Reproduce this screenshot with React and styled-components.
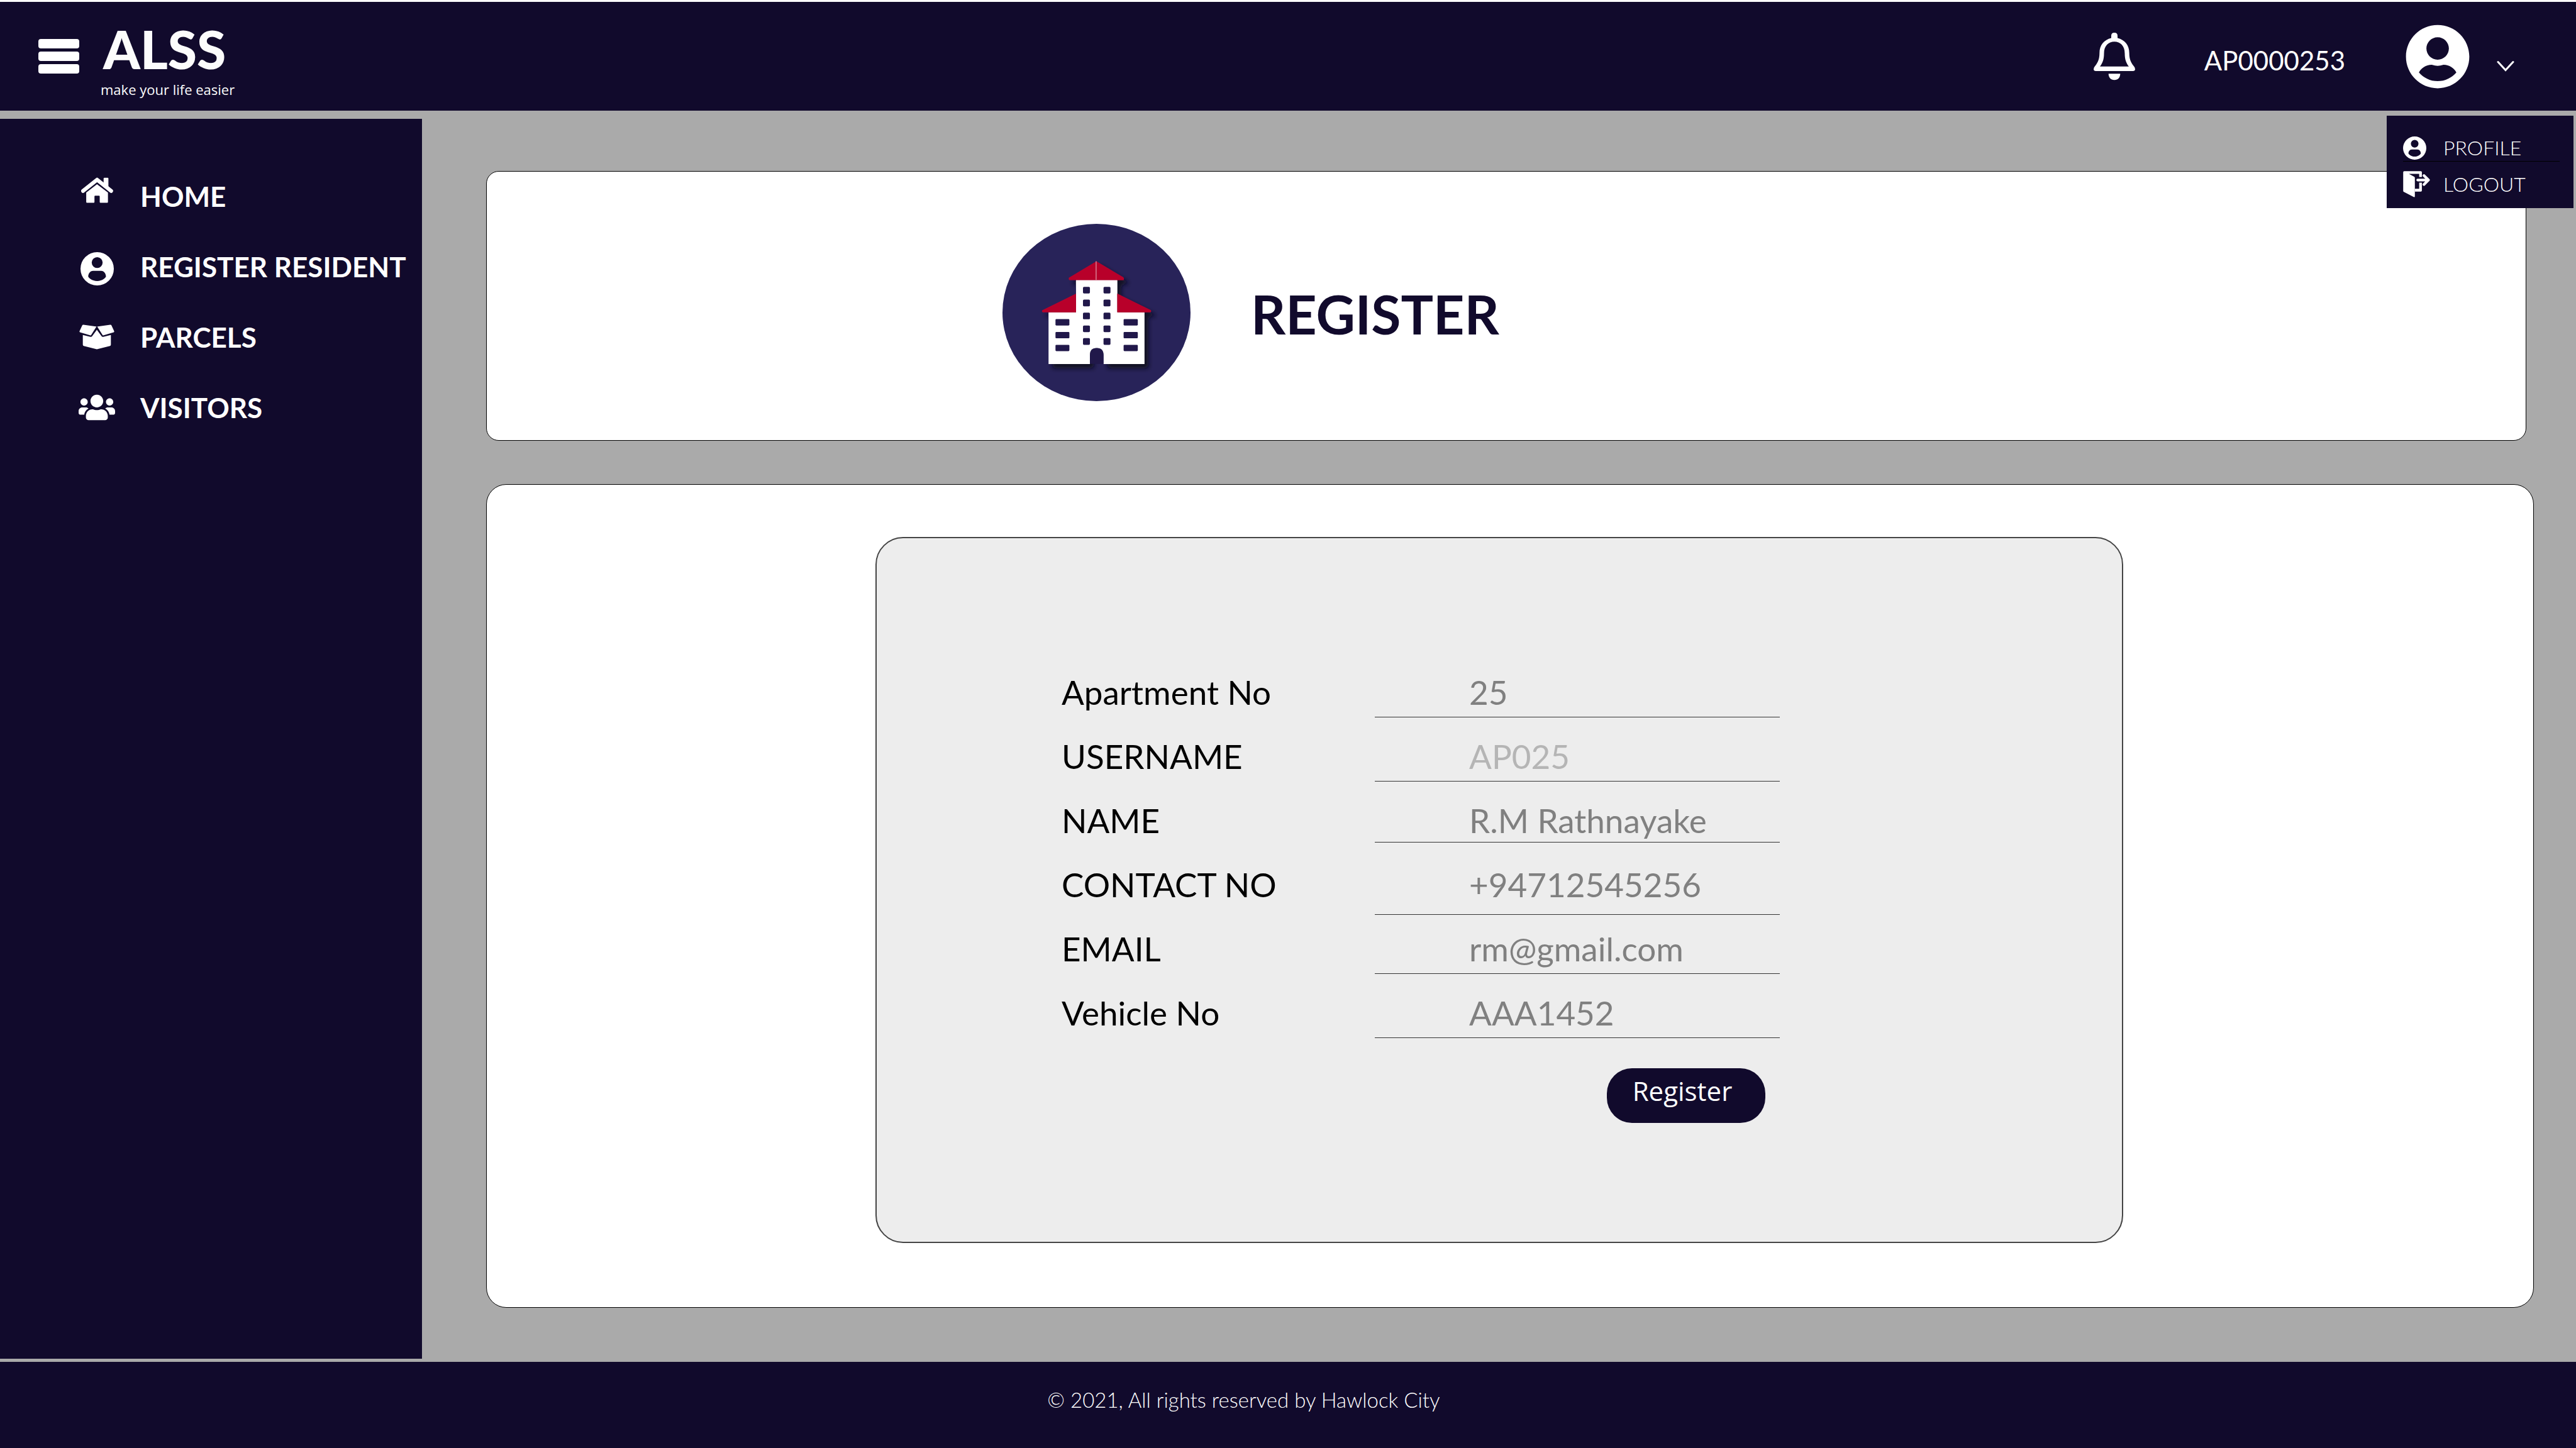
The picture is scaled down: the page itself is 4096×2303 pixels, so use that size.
import React from "react";
import styled, { createGlobalStyle, css } from "styled-components";
import { FaUserCircle, FaUsers } from "react-icons/fa";

const navy = "#110a2c";
const grey = "#aaaaaa";

const GlobalStyle = createGlobalStyle`
  *, *::before, *::after { box-sizing: border-box; }
  body {
    margin: 0;
    background: ${grey};
    font-family: Lato, "Open Sans", sans-serif;
  }
`;

const Page = styled.div`
  display: flex;
  flex-direction: column;
  min-height: 100vh;
  border-top: 3px solid #fff;
  background: ${grey};
`;

const Header = styled.header`
  position: relative;
  display: flex;
  align-items: center;
  justify-content: space-between;
  height: 173px;
  padding: 0 98px 0 61px;
  background: ${navy};
  color: #fff;
`;

const Group = styled.div`
  display: flex;
  align-items: center;
`;

const IconButton = styled.button`
  display: flex;
  padding: 0;
  border: 0;
  background: none;
  color: inherit;
  cursor: pointer;
`;

const MenuButton = styled(IconButton)`
  flex-direction: column;
  gap: 5px;
  width: 65px;
  margin-right: 34px;
`;

const Bar = styled.span`
  width: 100%;
  height: 15px;
  border-radius: 4px;
  background: #fff;
`;

const Brand = styled.a`
  display: flex;
  flex-direction: column;
  padding-top: 6px;
  color: #fcfcfc;
  text-decoration: none;
`;

const BrandName = styled.span`
  padding-left: 4px;
  font-size: 84px;
  font-weight: 900;
  line-height: 98px;
`;

const Tagline = styled.span`
  font-family: "Open Sans", sans-serif;
  font-size: 22px;
  line-height: 30px;
`;

const UserId = styled.span`
  padding-top: 12px;
  margin: 0 95px 0 110px;
  font-size: 42px;
  line-height: 48px;
`;

const ChevronButton = styled(IconButton)`
  padding-top: 30px;
  margin-left: 42px;
`;

const AccountMenu = styled.nav`
  position: absolute;
  z-index: 1;
  top: 181px;
  right: 4px;
  width: 297px;
  padding: 26px 22px 10px 26px;
  background: ${navy};
`;

const AccountLink = styled.a`
  display: grid;
  grid-template-columns: 42px 1fr;
  align-items: center;
  column-gap: 22px;
  height: ${(p) => (p.$divided ? 47 : 64)}px;
  padding-top: ${(p) => (p.$divided ? 4 : 8)}px;
  border-bottom: ${(p) => (p.$divided ? "1px solid #000" : "0")};
  color: #fff;
  font-size: 32px;
  font-weight: 300;
  line-height: 40px;
  text-decoration: none;
`;

const Body = styled.div`
  display: flex;
  flex: 1;
`;

const Sidebar = styled.nav`
  flex: 0 0 671px;
  margin: 13px 0 5px;
  padding: 93px 0 0 123px;
  background: ${navy};
`;

const NavList = styled.ul`
  display: flex;
  flex-direction: column;
  gap: 52px;
  margin: 0;
  padding: 0;
  list-style: none;
`;

const NavLink = styled.a`
  display: grid;
  grid-template-columns: 62px 1fr;
  column-gap: 38px;
  align-items: center;
  height: 60px;
  color: #fff;
  font-size: 44px;
  font-weight: 700;
  line-height: 60px;
  text-decoration: none;
  white-space: nowrap;
`;

const NavIcon = styled.span`
  display: flex;
  justify-content: center;
  align-self: ${(p) => p.$align || "center"};
`;

const Content = styled.main`
  display: flex;
  flex: 1;
  flex-direction: column;
  gap: 69px;
  padding: 96px 67px 86px 102px;
`;

const card = css`
  border: 1px solid #000;
  background: #fff;
`;

const TitleCard = styled.section`
  ${card}
  display: flex;
  align-items: center;
  gap: 96px;
  margin-right: 12px;
  padding: 83px 0 62px 820px;
  border-radius: 20px;
`;

const Title = styled.h1`
  margin: 0;
  padding-top: 4px;
  color: ${navy};
  font-size: 86px;
  font-weight: 700;
  line-height: 100px;
`;

const FormCard = styled.section`
  ${card}
  display: flex;
  flex: 1;
  padding: 83px 652px 102px 618px;
  border-radius: 32px;
`;

const Form = styled.form`
  flex: 1;
  padding: 213px 297px 0 294px;
  border: 2px solid #444;
  border-radius: 44px;
  background: #ededed;
`;

const Fields = styled.div`
  display: flex;
  flex-direction: column;
  align-items: flex-start;
`;

const Field = styled.div`
  display: grid;
  grid-template-columns: 498px 644px;
  align-items: start;
  height: 102px;
`;

const Label = styled.label`
  color: #000;
  font-size: 53px;
  line-height: 64px;
`;

const lineGaps = { tight: 2, regular: 7, loose: 15 };

const Input = styled.input`
  box-sizing: content-box;
  width: 494px;
  height: 64px;
  padding: 0 0 ${(p) => lineGaps[p.$line || "regular"]}px 150px;
  border: 0;
  border-bottom: 1px solid #333;
  border-radius: 0;
  outline: 0;
  background: none;
  color: #808080;
  font: inherit;
  font-size: 53px;
  line-height: 64px;

  &:disabled {
    color: #b5b5b5;
  }
`;

const Actions = styled.div`
  display: flex;
  justify-content: flex-end;
  width: 1142px;
  padding: 18px 23px 0 0;
`;

const SubmitButton = styled.button`
  width: 252px;
  height: 87px;
  padding: 0 12px 16px 0;
  border: 0;
  border-radius: 40px;
  background: ${navy};
  color: #fff;
  font-family: "Open Sans", sans-serif;
  font-size: 42px;
  line-height: 56px;
  cursor: pointer;
`;

const Footer = styled.footer`
  height: 137px;
  padding: 40px 141px 0 0;
  background: ${navy};
  color: #fff;
  font-size: 33px;
  font-weight: 300;
  line-height: 40px;
  text-align: center;
`;

const HomeIcon = () => (
  <svg width="51" height="41" viewBox="60 14 214 170" fill="#fff">
    <path d="M73 104 166.500 29 260 104" fill="none" stroke="#fff" strokeWidth="26" strokeLinecap="round" strokeLinejoin="round" />
    <path d="M215 16h22q5 0 5 5v62l-32-26V21q0-5 5-5z" />
    <path d="M166 59l73 56v63q0 5-5 5h-45q-5 0-5-5v-37q0-5-5-5h-25q-5 0-5 5v37q0 5-5 5H99q-5 0-5-5v-63z" />
  </svg>
);

const PersonIcon = ({ size }) => (
  <svg width={size} height={size} viewBox="57 513 220 220" fill="#fff">
    <path
      fillRule="evenodd"
      d="M167 513a110 110 0 1 1 0 220a110 110 0 1 1 0-220zM167 546a36 36 0 1 0 0 72a36 36 0 1 0 0-72zM140 636c-20 0-32 20-32 38 0 7 25 30 59 30s58-23 58-30c0-18-12-38-32-38z"
    />
  </svg>
);

const ParcelIcon = () => (
  <svg width="56" height="40" viewBox="48 968 236 166" fill="#fff">
    <path d="M76 969l90 12-33 56q-3 5-9 3l-71-21q-5-2-3-7l18-39q3-5 8-4z" />
    <path d="M256 969l-90 12 33 56q3 5 9 3l71-21q5-2 3-7l-18-39q-3-5-8-4z" />
    <path d="M72 1037l51 13q8 1 12-5l31-42 31 42q4 6 12 5l51-13v66q0 6-6 8l-88 22-88-22q-6-2-6-8z" />
    <path d="M127 1046 166 984 205 1046" fill="none" stroke={navy} strokeWidth="7" />
  </svg>
);

const BellIcon = () => (
  <svg width="66" height="76" viewBox="64 75 92 106" fill="#fff">
    <path
      fillRule="evenodd"
      d="M110 75q7 0 7 7v5c16 4 26 16 26 33 0 14 4 21 9 28q4 4 4 8 0 4-5 4H69q-5 0-5-4 0-4 4-8c5-7 9-14 9-28 0-17 10-29 26-33v-5q0-7 7-7zM110 95c-13 0-23 9-23 26 0 15-4 22-9 29h64c-5-7-9-14-9-29 0-17-10-26-23-26z"
    />
    <path d="M97 166h26c0 8-5 14-13 14s-13-6-13-14z" />
  </svg>
);

const ChevronIcon = () => (
  <svg width="28" height="18" viewBox="0 0 28 18" fill="none" stroke="#fff" strokeWidth="3" strokeLinecap="round">
    <path d="M2 2.500 14 15.500 26 2.500" />
  </svg>
);

const ExitIcon = () => (
  <svg width="43" height="42" viewBox="165 383 181 176" fill="#fff">
    <path d="M173 384h111q7 0 7 7v32h-18v-21h-69l35 18q5 2 5 8v125q0 6-6 4l-67-34q-5-2-5-8V391q0-7 7-7z" />
    <path d="M244 520v-18h29v-41h18v52q0 7-7 7z" />
    <path d="M263 443H325M305 413l30 30-30 30" fill="none" stroke="#fff" strokeWidth="18" strokeLinecap="round" strokeLinejoin="round" />
  </svg>
);

const sideRows = [737, 822, 907];
const towerRows = [523, 608, 694, 779, 863];

const BuildingLogo = () => (
  <svg width="299" height="282" viewBox="105 106 1245 1174" role="img" aria-label="Apartment building">
    <defs>
      <filter id="cast" x="-20%" y="-20%" width="150%" height="150%">
        <feDropShadow dx="26" dy="28" stdDeviation="15" floodColor="#0d0b1c" floodOpacity="0.95" />
      </filter>
    </defs>
    <ellipse cx="727.500" cy="693" rx="622.500" ry="587" fill="#282359" />
    <g filter="url(#cast)">
      <path d="M592 478h273v214h180v342H774V975q0-47-45-47t-45 47v59H410V692h182z" fill="#fff" />
      <path d="M727 354l178 106q8 10 1 19H548q-9-9 0-18z" fill="#b8002c" />
      <path d="M592 568v124H372q-10-8-2-15z" fill="#b8002c" />
      <path d="M865 568v124h220q8-8 2-15z" fill="#b8002c" />
    </g>
    <path d="M725 354v124" stroke="#e0a0b0" strokeWidth="5" />
    <path d="M684 1033V975q0-47 45-47t45 47v58z" fill="#21184a" />
    {towerRows.map((y) => (
      <g key={y} fill="#21184a">
        <rect x="638" y={y} width="46" height="44" rx="7" />
        <rect x="774" y={y} width="46" height="44" rx="7" />
      </g>
    ))}
    {sideRows.map((y) => (
      <g key={y} fill="#21184a">
        <rect x="456" y={y} width="92" height="42" rx="6" />
        <rect x="907" y={y} width="94" height="42" rx="6" />
      </g>
    ))}
  </svg>
);

const navItems = [
  { label: "HOME", icon: <HomeIcon />, align: "start" },
  { label: "REGISTER RESIDENT", icon: <PersonIcon size={53} />, align: "end" },
  { label: "PARCELS", icon: <ParcelIcon /> },
  { label: "VISITORS", icon: <FaUsers size={58} /> },
];

const fields = [
  { id: "apartment", label: "Apartment No", value: "25" },
  { id: "username", label: "USERNAME", value: "AP025", disabled: true },
  { id: "name", label: "NAME", value: "R.M Rathnayake", line: "tight" },
  { id: "contact", label: "CONTACT NO", value: "+94712545256", line: "loose" },
  { id: "email", label: "EMAIL", value: "rm@gmail.com" },
  { id: "vehicle", label: "Vehicle No", value: "AAA1452" },
];

export default function App() {
  return (
    <Page>
      <GlobalStyle />
      <Header>
        <Group>
          <MenuButton type="button" aria-label="Menu">
            <Bar />
            <Bar />
            <Bar />
          </MenuButton>
          <Brand href="#">
            <BrandName>ALSS</BrandName>
            <Tagline>make your life easier</Tagline>
          </Brand>
        </Group>
        <Group>
          <IconButton type="button" aria-label="Notifications">
            <BellIcon />
          </IconButton>
          <UserId>AP0000253</UserId>
          <FaUserCircle size={104} />
          <ChevronButton type="button" aria-label="Account menu" aria-expanded="true">
            <ChevronIcon />
          </ChevronButton>
        </Group>
        <AccountMenu aria-label="Account">
          <AccountLink href="#" $divided>
            <PersonIcon size={37} />
            PROFILE
          </AccountLink>
          <AccountLink href="#">
            <ExitIcon />
            LOGOUT
          </AccountLink>
        </AccountMenu>
      </Header>
      <Body>
        <Sidebar aria-label="Main">
          <NavList>
            {navItems.map((item) => (
              <li key={item.label}>
                <NavLink href="#">
                  <NavIcon $align={item.align}>{item.icon}</NavIcon>
                  {item.label}
                </NavLink>
              </li>
            ))}
          </NavList>
        </Sidebar>
        <Content>
          <TitleCard>
            <BuildingLogo />
            <Title>REGISTER</Title>
          </TitleCard>
          <FormCard>
            <Form onSubmit={(e) => e.preventDefault()}>
              <Fields>
                {fields.map((f) => (
                  <Field key={f.id}>
                    <Label htmlFor={f.id}>{f.label}</Label>
                    <Input id={f.id} defaultValue={f.value} disabled={f.disabled} $line={f.line} />
                  </Field>
                ))}
                <Actions>
                  <SubmitButton type="submit">Register</SubmitButton>
                </Actions>
              </Fields>
            </Form>
          </FormCard>
        </Content>
      </Body>
      <Footer>© 2021, All rights reserved by Hawlock City</Footer>
    </Page>
  );
}
